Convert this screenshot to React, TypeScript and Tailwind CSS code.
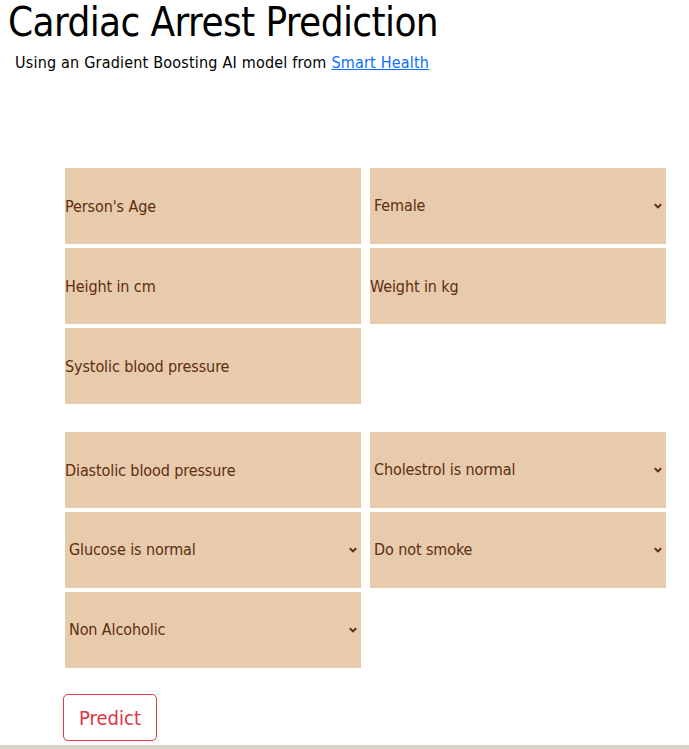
import React from 'react';

const fieldCls =
  "h-[76px] w-full bg-[#e8caad] text-[16px] text-[#5c2e0e] outline-none border-0 placeholder:text-[#5c2e0e]";

const Chevron = () => (
  <svg
    className="pointer-events-none absolute right-[3px] top-1/2 -translate-y-1/2"
    width="10"
    height="8"
    viewBox="0 0 10 8"
    fill="none"
  >
    <path d="M1.8 2.2 L5 5.4 L8.2 2.2" stroke="#5c2e0e" strokeWidth="2" />
  </svg>
);

const TextField = ({ placeholder }: { placeholder: string }) => (
  <input type="text" placeholder={placeholder} className={`${fieldCls} px-0`} />
);

const SelectField = ({ options }: { options: string[] }) => (
  <div className="relative">
    <select className={`${fieldCls} pl-[4px] appearance-none`}>
      {options.map(o => (
        <option key={o}>{o}</option>
      ))}
    </select>
    <Chevron />
  </div>
);

export default function App() {
  return (
    <div className="min-h-[749px] bg-white font-['DejaVu_Sans_Condensed','DejaVu_Sans',sans-serif] text-black border-b-[4px] border-[#d6d2ca] flex flex-col">
      <h1 className="pl-[8px] pt-0 text-[40px] leading-[44px] tracking-[-0.6px]">Cardiac Arrest Prediction</h1>
      <p className="pl-[15px] mt-[9px] text-[16px] leading-[20px] tracking-[0.2px]">
        Using an Gradient Boosting AI model from{' '}
        <a href="#" className="text-[#0d6efd] underline">Smart Health</a>
      </p>

      <form className="pl-[65px] mt-[95px] w-[666px]" onSubmit={e => e.preventDefault()}>
        <div className="grid grid-cols-2 gap-x-[9px] gap-y-[4px] tracking-[-0.1px]">
          <TextField placeholder="Person's Age" />
          <SelectField options={['Female', 'Male']} />
          <TextField placeholder="Height in cm" />
          <TextField placeholder="Weight in kg" />
          <TextField placeholder="Systolic blood pressure" />
        </div>

        <div className="grid grid-cols-2 gap-x-[9px] gap-y-[4px] mt-[28px] tracking-[-0.1px]">
          <TextField placeholder="Diastolic blood pressure" />
          <SelectField options={['Cholestrol is normal', 'Above normal', 'Well above normal']} />
          <SelectField options={['Glucose is normal', 'Above normal', 'Well above normal']} />
          <SelectField options={['Do not smoke', 'Smoker']} />
          <SelectField options={['Non Alcoholic', 'Alcoholic']} />
        </div>

        <button
          type="submit"
          className="mt-[26px] -ml-[2px] h-[47px] w-[94px] rounded-[5px] border border-[#dc3545] text-[#dc3545] text-[20px]"
        >
          Predict
        </button>
      </form>
    </div>
  );
}
